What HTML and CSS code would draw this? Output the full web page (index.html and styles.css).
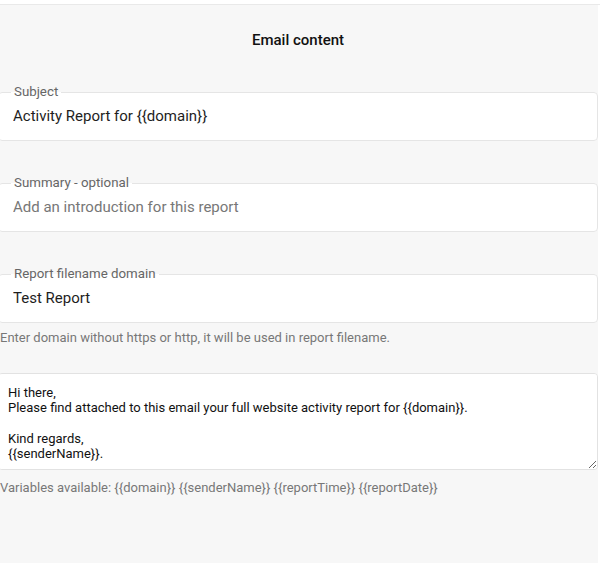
FILE: index.html
```html
<!DOCTYPE html>
<html lang="en">
<head>
<meta charset="utf-8">
<title>Email content</title>
<link rel="stylesheet" href="styles.css">
</head>
<body>
<div class="topbar"></div>
<main class="panel">
  <h2 class="title">Email content</h2>
  <fieldset class="field">
    <legend class="field-label">Subject</legend>
    <input class="field-input" type="text" value="Activity Report for {{domain}}">
  </fieldset>
  <fieldset class="field field-spaced">
    <legend class="field-label">Summary - optional</legend>
    <input class="field-input" type="text" placeholder="Add an introduction for this report">
  </fieldset>
  <fieldset class="field field-spaced">
    <legend class="field-label">Report filename domain</legend>
    <input class="field-input" type="text" value="Test Report">
  </fieldset>
  <p class="help help-domain">Enter domain without https or http, it will be used in report filename.</p>
  <textarea class="message" rows="5">Hi there,
Please find attached to this email your full website activity report for {{domain}}.

Kind regards,
{{senderName}}.</textarea>
  <p class="help help-vars">Variables available: {{domain}} {{senderName}} {{reportTime}} {{reportDate}}</p>
</main>
</body>
</html>
```
FILE: styles.css
```css
html, body {
  margin: 0;
  padding: 0;
  background: #ffffff;
  font-family: Roboto, "Liberation Sans", sans-serif;
  overflow: hidden;
}

.topbar {
  height: 4px;
  border-bottom: 1px solid #e9e9e9;
  background: #ffffff;
}

.panel {
  background: #f7f7f7;
  margin-left: -2px;
  width: 600px;
  height: 558px;
  box-sizing: border-box;
  padding-top: 25px;
  display: flex;
  flex-direction: column;
}

.title {
  margin: 0;
  text-align: center;
  font-size: 15px;
  line-height: 20px;
  font-weight: 500;
  color: #111;
}

.field {
  margin: 34px 0 0;
  padding: 0 0 0 14px;
  border: 1px solid #e5e5e5;
  border-radius: 4px;
  background: #ffffff;
  min-width: 0;
}

.field-spaced {
  margin-top: 34px;
}

.field-label {
  font-size: 13.3px;
  line-height: 16px;
  color: #666;
  padding: 0 3px;
  margin-left: -2px;
}

.field-input {
  display: block;
  width: 100%;
  box-sizing: border-box;
  border: 0;
  outline: none;
  background: transparent;
  font-family: Roboto, "Liberation Sans", sans-serif;
  font-size: 15px;
  line-height: 20px;
  height: 40px;
  padding: 6px 0 14px;
  color: #1e1e1e;
}

.field-input::placeholder {
  color: #777;
  opacity: 1;
}

.help {
  margin: 0;
  font-size: 13px;
  line-height: 16px;
  color: #777;
  padding-left: 2px;
}

.help-domain {
  margin-top: 7px;
}

.message {
  margin-top: 27px;
  display: block;
  width: 600px;
  height: 97px;
  box-sizing: border-box;
  border: 1px solid #e2e2e2;
  border-radius: 4px;
  background: #ffffff;
  padding: 11px 9px 9px;
  font-family: Roboto, "Liberation Sans", sans-serif;
  font-size: 13px;
  line-height: 15.3px;
  color: #111;
  resize: vertical;
  outline: none;
}

.help-vars {
  margin-top: 10px;
}
```
